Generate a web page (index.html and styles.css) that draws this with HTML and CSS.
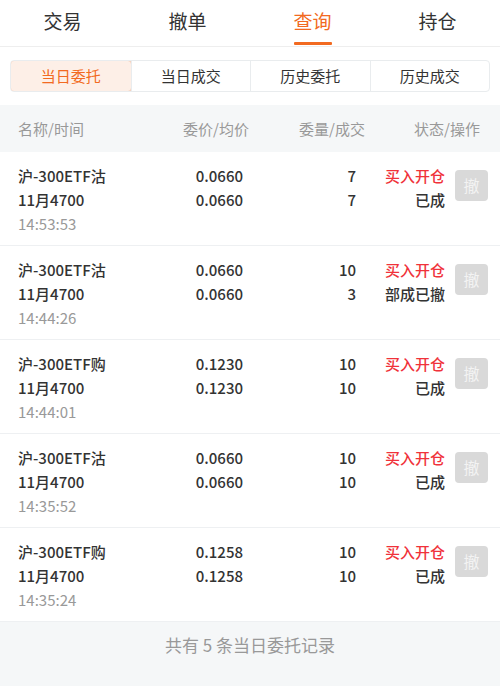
FILE: index.html
```html
<!DOCTYPE html>
<html lang="zh-CN">
<head>
<meta charset="utf-8">
<link rel="stylesheet" href="styles.css">
</head>
<body>
<div class="page">
  <nav class="tabs">
    <div class="tab">交易</div>
    <div class="tab">撤单</div>
    <div class="tab active">查询</div>
    <div class="tab">持仓</div>
  </nav>
  <div class="segbar">
    <div class="seg">
      <div class="seg-item on">当日委托</div>
      <div class="seg-item">当日成交</div>
      <div class="seg-item">历史委托</div>
      <div class="seg-item">历史成交</div>
    </div>
  </div>
  <div class="thead">
    <div>名称/时间</div>
    <div class="r">委价/均价</div>
    <div class="r">委量/成交</div>
    <div class="r">状态/操作</div>
  </div>
  <div class="list">
    <div class="row">
      <div class="c1"><div class="b">沪-300ETF沽</div><div class="b">11月4700</div><div class="t">14:53:53</div></div>
      <div class="c2"><div>0.0660</div><div>0.0660</div></div>
      <div class="c3"><div>7</div><div>7</div></div>
      <div class="c4"><div class="red">买入开仓</div><div>已成</div></div>
      <div class="c5"><span class="btn">撤</span></div>
    </div>
    <div class="row">
      <div class="c1"><div class="b">沪-300ETF沽</div><div class="b">11月4700</div><div class="t">14:44:26</div></div>
      <div class="c2"><div>0.0660</div><div>0.0660</div></div>
      <div class="c3"><div>10</div><div>3</div></div>
      <div class="c4"><div class="red">买入开仓</div><div>部成已撤</div></div>
      <div class="c5"><span class="btn">撤</span></div>
    </div>
    <div class="row">
      <div class="c1"><div class="b">沪-300ETF购</div><div class="b">11月4700</div><div class="t">14:44:01</div></div>
      <div class="c2"><div>0.1230</div><div>0.1230</div></div>
      <div class="c3"><div>10</div><div>10</div></div>
      <div class="c4"><div class="red">买入开仓</div><div>已成</div></div>
      <div class="c5"><span class="btn">撤</span></div>
    </div>
    <div class="row">
      <div class="c1"><div class="b">沪-300ETF沽</div><div class="b">11月4700</div><div class="t">14:35:52</div></div>
      <div class="c2"><div>0.0660</div><div>0.0660</div></div>
      <div class="c3"><div>10</div><div>10</div></div>
      <div class="c4"><div class="red">买入开仓</div><div>已成</div></div>
      <div class="c5"><span class="btn">撤</span></div>
    </div>
    <div class="row">
      <div class="c1"><div class="b">沪-300ETF购</div><div class="b">11月4700</div><div class="t">14:35:24</div></div>
      <div class="c2"><div>0.1258</div><div>0.1258</div></div>
      <div class="c3"><div>10</div><div>10</div></div>
      <div class="c4"><div class="red">买入开仓</div><div>已成</div></div>
      <div class="c5"><span class="btn">撤</span></div>
    </div>
  </div>
  <div class="footer">共有 5 条当日委托记录</div>
</div>
</body>
</html>
```
FILE: styles.css
```css
* { box-sizing: border-box; margin: 0; padding: 0; }
html, body { width: 500px; height: 686px; overflow: hidden; }
body {
  font-family: "Noto Sans CJK SC", "Noto Sans", sans-serif;
  background: #f5f7f8;
  color: #333;
}
.page { display: flex; flex-direction: column; height: 686px; }

.tabs {
  display: grid;
  grid-template-columns: repeat(4, 1fr);
  height: 47px;
  background: #fff;
  border-bottom: 1px solid #eeeeee;
}
.tab {
  position: relative;
  text-align: center;
  font-size: 19px;
  line-height: 42px;
  color: #333;
}
.tab.active { color: #f26a21; }
.tab.active::after {
  content: "";
  position: absolute;
  left: 50%;
  margin-left: -19px;
  top: 42px;
  width: 38px;
  height: 3px;
  background: #f26a21;
  border-radius: 1px;
}

.segbar {
  background: #fff;
  height: 58px;
  padding: 13px 10px 0 10px;
}
.seg {
  display: grid;
  grid-template-columns: repeat(4, 1fr);
  height: 32px;
  border: 1px solid #e9ecee;
  border-radius: 4px;
  overflow: hidden;
}
.seg-item {
  text-align: center;
  font-size: 15px;
  line-height: 30px;
  color: #333;
  border-left: 1px solid #e9ecee;
}
.seg-item:first-child { border-left: none; }
.seg-item.on {
  background: #fdefe7;
  color: #f26a21;
  border: 1px solid #f3c8b0;
  border-radius: 4px;
  margin: -1px;
  line-height: 30px;
}

.thead {
  display: grid;
  grid-template-columns: 132px 99px 116px 115px;
  padding: 0 20px 0 18px;
  height: 47px;
  align-items: center;
  font-size: 15px;
  color: #999;
}
.r { text-align: right; }

.list { display: flex; flex-direction: column; }
.row {
  display: grid;
  grid-template-columns: 132px 93px 113px 89px 43px;
  padding: 12px 12px 9px 18px;
  height: 94px;
  background: #fff;
  border-bottom: 1px solid #eef0f2;
  font-size: 15px;
  line-height: 24px;
}
.c1 .b, .c2, .c3, .c4 { font-weight: 500; }
.c2, .c3, .c4 { text-align: right; color: #333; }
.c4 .red { color: #f0323a; }
.t { color: #999; font-size: 15px; font-weight: normal; }
.c5 { display: flex; justify-content: flex-end; padding-top: 6px; }
.btn {
  display: block;
  width: 33px;
  height: 31px;
  background: #d9d9d9;
  color: #f3f3f3;
  border-radius: 4px;
  text-align: center;
  line-height: 31px;
  font-size: 16px;
}

.footer {
  flex: 1;
  text-align: center;
  font-size: 17px;
  color: #999;
  padding-top: 10px;
}
```
